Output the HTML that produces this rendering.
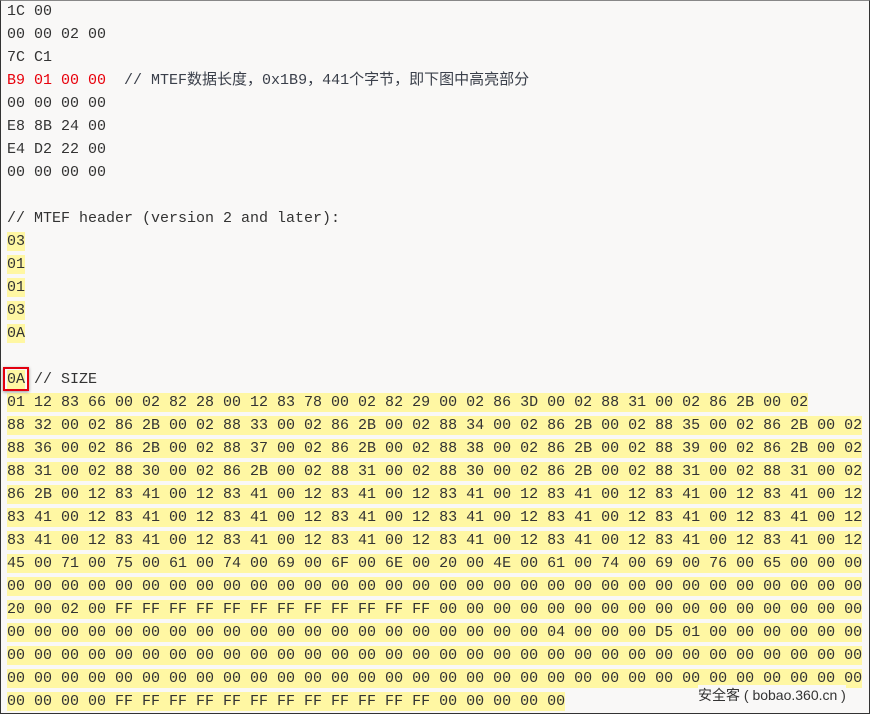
<!DOCTYPE html>
<html><head><meta charset="utf-8"><style>
html,body{margin:0;padding:0}
body{width:870px;height:714px;overflow:hidden;background:#f9f8f7;position:relative}
.frame{position:absolute;left:0;top:0;width:868px;height:712px;border:1px solid #333;border-top-color:#888;box-sizing:content-box}
pre{margin:0;position:absolute;left:7px;top:0;font-family:"Liberation Mono","Noto Sans CJK SC",monospace;font-size:15px;line-height:23px;color:#333;white-space:pre}
.h{background:#fff7a3;padding:1px 0}
.r{color:#e8000b}
.c{color:#3a3f4a}
.box{position:absolute;left:3px;top:367px;width:22px;height:20px;border:2px solid #e3000f;box-shadow:0 1px 3px rgba(0,0,0,.4)}
.wm{position:absolute;left:698px;top:685px;font-family:"Liberation Sans","Noto Sans CJK SC",sans-serif;font-size:14px;color:#333;background:#f9f8f7}
</style></head><body>
<div class="frame"></div>
<pre>1C 00
00 00 02 00
7C C1
<span class="r">B9 01 00 00</span>  <span class="c">// MTEF数据长度，0x1B9，441个字节，即下图中高亮部分</span>
00 00 00 00
E8 8B 24 00
E4 D2 22 00
00 00 00 00

// MTEF header (version 2 and later):
<span class="h">03</span>
<span class="h">01</span>
<span class="h">01</span>
<span class="h">03</span>
<span class="h">0A</span>

<span class="h">0A</span> // SIZE
<span class="h">01 12 83 66 00 02 82 28 00 12 83 78 00 02 82 29 00 02 86 3D 00 02 88 31 00 02 86 2B 00 02</span>
<span class="h">88 32 00 02 86 2B 00 02 88 33 00 02 86 2B 00 02 88 34 00 02 86 2B 00 02 88 35 00 02 86 2B 00 02</span>
<span class="h">88 36 00 02 86 2B 00 02 88 37 00 02 86 2B 00 02 88 38 00 02 86 2B 00 02 88 39 00 02 86 2B 00 02</span>
<span class="h">88 31 00 02 88 30 00 02 86 2B 00 02 88 31 00 02 88 30 00 02 86 2B 00 02 88 31 00 02 88 31 00 02</span>
<span class="h">86 2B 00 12 83 41 00 12 83 41 00 12 83 41 00 12 83 41 00 12 83 41 00 12 83 41 00 12 83 41 00 12</span>
<span class="h">83 41 00 12 83 41 00 12 83 41 00 12 83 41 00 12 83 41 00 12 83 41 00 12 83 41 00 12 83 41 00 12</span>
<span class="h">83 41 00 12 83 41 00 12 83 41 00 12 83 41 00 12 83 41 00 12 83 41 00 12 83 41 00 12 83 41 00 12</span>
<span class="h">45 00 71 00 75 00 61 00 74 00 69 00 6F 00 6E 00 20 00 4E 00 61 00 74 00 69 00 76 00 65 00 00 00</span>
<span class="h">00 00 00 00 00 00 00 00 00 00 00 00 00 00 00 00 00 00 00 00 00 00 00 00 00 00 00 00 00 00 00 00</span>
<span class="h">20 00 02 00 FF FF FF FF FF FF FF FF FF FF FF FF 00 00 00 00 00 00 00 00 00 00 00 00 00 00 00 00</span>
<span class="h">00 00 00 00 00 00 00 00 00 00 00 00 00 00 00 00 00 00 00 00 04 00 00 00 D5 01 00 00 00 00 00 00</span>
<span class="h">00 00 00 00 00 00 00 00 00 00 00 00 00 00 00 00 00 00 00 00 00 00 00 00 00 00 00 00 00 00 00 00</span>
<span class="h">00 00 00 00 00 00 00 00 00 00 00 00 00 00 00 00 00 00 00 00 00 00 00 00 00 00 00 00 00 00 00 00</span>
<span class="h">00 00 00 00 FF FF FF FF FF FF FF FF FF FF FF FF 00 00 00 00 00</span></pre>
<div class="box"></div>
<div class="wm">安全客 ( bobao.360.cn )</div>
</body></html>
